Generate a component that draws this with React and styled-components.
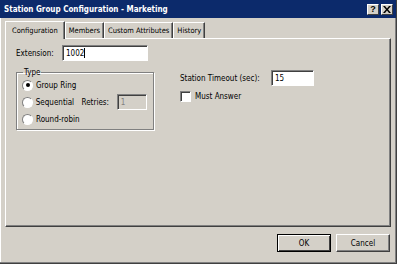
import styled, { createGlobalStyle } from 'styled-components';

const Global = createGlobalStyle`
    html, body {
        margin: 0;
        padding: 0;
        background: #d4d0c8;
    }
    body {
        font-family: "DejaVu Sans Condensed", "Liberation Sans", Arial, sans-serif;
        font-size: 8px;
        color: #000;
    }
`

export default function App() {
    return (
        <>
            <Global />
            <Window>
                <TitleBar>
                    <Title>Station Group Configuration - Marketing</Title>
                    <CaptionButtons>
                        <CaptionButton>?</CaptionButton>
                        <CaptionButton>
                            <svg width="8" height="7" viewBox="0 0 8 7">
                                <path d="M0 0h2l2 2.5L6 0h2L5 3.5 8 7H6L4 4.5 2 7H0l3-3.5z" fill="#000" />
                            </svg>
                        </CaptionButton>
                    </CaptionButtons>
                </TitleBar>
                <Content>
                    <TabStrip>
                        <Tab active>Configuration</Tab>
                        <Tab>Members</Tab>
                        <Tab>Custom Attributes</Tab>
                        <Tab>History</Tab>
                    </TabStrip>
                    <Panel>
                        <LeftColumn>
                            <FieldRow>
                                <Label>Extension:</Label>
                                <TextBox width={86}>
                                    1002<Caret />
                                </TextBox>
                            </FieldRow>
                            <GroupBox>
                                <Legend>Type</Legend>
                                <RadioRow>
                                    <Radio checked />
                                    <span>Group Ring</span>
                                </RadioRow>
                                <RadioRow>
                                    <Radio />
                                    <RadioText>Sequential</RadioText>
                                    <RetriesLabel>Retries:</RetriesLabel>
                                    <TextBox width={31} disabled>1</TextBox>
                                </RadioRow>
                                <RadioRow>
                                    <Radio />
                                    <span>Round-robin</span>
                                </RadioRow>
                            </GroupBox>
                        </LeftColumn>
                        <RightColumn>
                            <FieldRow>
                                <TimeoutLabel>Station Timeout (sec):</TimeoutLabel>
                                <TextBox width={43}>15</TextBox>
                            </FieldRow>
                            <CheckRow>
                                <CheckBox />
                                <span>Must Answer</span>
                            </CheckRow>
                        </RightColumn>
                    </Panel>
                    <Footer>
                        <Button isDefault>OK</Button>
                        <Button>Cancel</Button>
                    </Footer>
                </Content>
            </Window>
        </>
    )
}

const Window = styled.div`
    width: 397px;
    height: 264px;
    box-sizing: border-box;
    display: flex;
    flex-direction: column;
    background: #d4d0c8;
    border-right: 1px solid #404040;
    border-bottom: 1px solid #404040;
    box-shadow: inset -1px -1px 0 #808080, inset 1px 0 0 #ffffff;
`

const TitleBar = styled.div`
    height: 18px;
    display: flex;
    align-items: center;
    justify-content: space-between;
    background: #0c2a6b;
    padding: 0 3px 0 4px;
    flex-shrink: 0;
`

const Title = styled.span`
    color: #fff;
    font-weight: 700;
    font-size: 8px;
`

const CaptionButtons = styled.div`
    display: flex;
    gap: 2px;
`

const CaptionButton = styled.div`
    width: 12px;
    height: 11px;
    box-sizing: border-box;
    background: #d4d0c8;
    border-top: 1px solid #fff;
    border-left: 1px solid #fff;
    border-right: 1px solid #404040;
    border-bottom: 1px solid #404040;
    display: flex;
    align-items: center;
    justify-content: center;
    font-family: "Liberation Sans", Arial, sans-serif;
    font-weight: 700;
    font-size: 9px;
    line-height: 1;
`

const Content = styled.div`
    flex: 1;
    display: flex;
    flex-direction: column;
    padding: 2px 5px 0 5px;
`

const TabStrip = styled.div`
    display: flex;
    align-items: flex-end;
    height: 18px;
`

const Tab = styled.div`
    height: ${p => (p.active ? '18px' : '16px')};
    box-sizing: border-box;
    padding: 0 ${p => (p.active ? '6px' : '3px')};
    margin-bottom: ${p => (p.active ? '-1px' : '0')};
    display: flex;
    align-items: center;
    font-size: 7.5px;
    background: #d4d0c8;
    border-top: 1px solid #fff;
    border-left: 1px solid #fff;
    border-right: 1px solid #404040;
    box-shadow: inset -1px 0 0 #808080;
    position: relative;
    z-index: ${p => (p.active ? 1 : 0)};
`

const Panel = styled.div`
    height: 189px;
    box-sizing: border-box;
    display: flex;
    padding: 6px 10px;
    border-top: 1px solid #fff;
    border-left: 1px solid #fff;
    border-right: 1px solid #404040;
    border-bottom: 1px solid #404040;
    box-shadow: inset -1px -1px 0 #808080;
`

const LeftColumn = styled.div`
    width: 138px;
    display: flex;
    flex-direction: column;
    gap: 7px;
`

const RightColumn = styled.div`
    margin-left: 26px;
    padding-top: 25px;
    display: flex;
    flex-direction: column;
    gap: 4px;
`

const FieldRow = styled.div`
    display: flex;
    align-items: center;
    height: 16px;
`

const Label = styled.span`
    width: 46px;
`

const TimeoutLabel = styled.span`
    width: 91px;
`

const TextBox = styled.div`
    width: ${p => p.width}px;
    height: 16px;
    box-sizing: border-box;
    background: ${p => (p.disabled ? '#d4d0c8' : '#fff')};
    color: ${p => (p.disabled ? '#808080' : '#000')};
    border-top: 1px solid #808080;
    border-left: 1px solid #808080;
    border-right: 1px solid #fff;
    border-bottom: 1px solid #fff;
    box-shadow: inset 1px 1px 0 #404040;
    padding: 0 3px;
    display: flex;
    align-items: center;
`

const Caret = styled.span`
    width: 1px;
    height: 10px;
    background: #000;
`

const GroupBox = styled.fieldset`
    margin: 0;
    padding: 2px 6px 6px 5px;
    width: 138px;
    min-width: 0;
    height: 62px;
    box-sizing: border-box;
    border: 1px solid #808080;
    box-shadow: 1px 1px 0 #fff, inset 1px 1px 0 #fff;
    display: flex;
    flex-direction: column;
    gap: 5px;
`

const Legend = styled.legend`
    padding: 0 1px;
    margin-left: 1px;
`

const RadioRow = styled.label`
    display: flex;
    align-items: center;
    height: 12px;
    gap: 3px;
`

const RadioText = styled.span`
    width: 44px;
`

const RetriesLabel = styled.span`
    width: 33px;
`

const Radio = styled.span`
    width: 11px;
    height: 11px;
    box-sizing: border-box;
    border-radius: 50%;
    background: #fff;
    border: 1px solid;
    border-color: #808080 #fff #fff #808080;
    display: flex;
    align-items: center;
    justify-content: center;
    &::after {
        content: '';
        width: 4px;
        height: 4px;
        border-radius: 50%;
        background: #000;
        opacity: ${p => (p.checked ? 1 : 0)};
    }
`

const CheckRow = styled.label`
    display: flex;
    align-items: center;
    gap: 4px;
    height: 12px;
`

const CheckBox = styled.span`
    width: 11px;
    height: 11px;
    box-sizing: border-box;
    background: #fff;
    border: 1px solid;
    border-color: #808080 #fff #fff #808080;
    box-shadow: inset 1px 1px 0 #404040;
`

const Footer = styled.div`
    display: flex;
    justify-content: flex-end;
    gap: 5px;
    padding: 7px 1px 0 0;
`

const Button = styled.div`
    width: 54px;
    height: 18px;
    box-sizing: border-box;
    display: flex;
    align-items: center;
    justify-content: center;
    background: #d4d0c8;
    border: 1px solid;
    border-color: ${p => (p.isDefault ? '#000' : '#fff #404040 #404040 #fff')};
    box-shadow: ${p => (p.isDefault ? 'inset 1px 1px 0 #fff, inset -1px -1px 0 #404040' : 'inset -1px -1px 0 #808080')};
`
